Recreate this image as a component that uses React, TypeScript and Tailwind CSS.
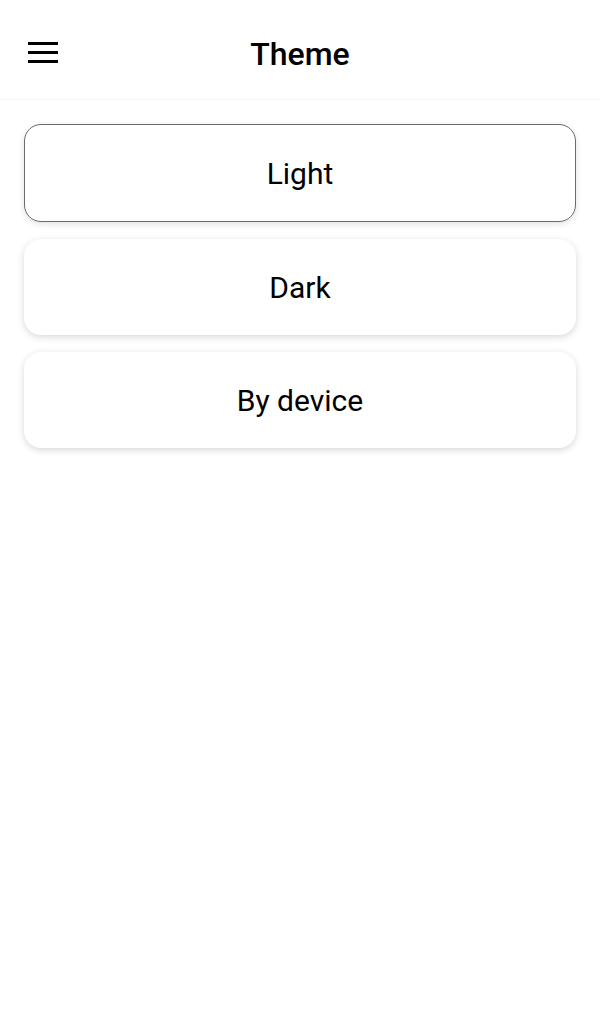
import React from "react";

export default function App() {
  const font = { fontFamily: "Roboto, 'Noto Sans', sans-serif" };
  return (
    <div className="w-[600px] h-[1033px] bg-white text-black" style={font}>
      <header className="h-[100px] border-b border-[#f4f4f4] relative flex items-center justify-center pt-[8px]">
        <div className="absolute left-[28px] top-[42px] flex flex-col gap-[6px]">
          <span className="block w-[30px] h-[3px] bg-black" />
          <span className="block w-[30px] h-[3px] bg-black" />
          <span className="block w-[30px] h-[3px] bg-black" />
        </div>
        <h1 className="text-[32px] font-medium leading-none">Theme</h1>
      </header>
      <div className="flex flex-col px-[24px] pt-[24px]">
        <button className="h-[98px] rounded-[17px] border border-[#6b6b6b] bg-white shadow-[0_2px_6px_rgba(0,0,0,0.12)] text-[30px] flex items-center justify-center">
          Light
        </button>
        <button className="mt-[17px] h-[96px] rounded-[17px] bg-white shadow-[0_2px_7px_rgba(0,0,0,0.16)] text-[30px] flex items-center justify-center">
          Dark
        </button>
        <button className="mt-[17px] h-[96px] rounded-[17px] bg-white shadow-[0_2px_7px_rgba(0,0,0,0.16)] text-[30px] flex items-center justify-center">
          By device
        </button>
      </div>
    </div>
  );
}
